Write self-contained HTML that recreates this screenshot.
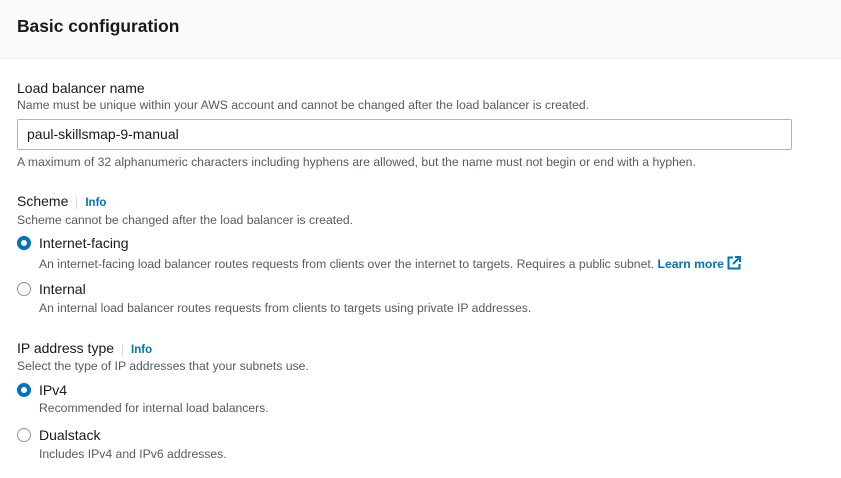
<!DOCTYPE html>
<html><head><style>
*{margin:0;padding:0;box-sizing:border-box}
body{width:841px;height:478px;background:#fff;font-family:"Liberation Sans",sans-serif;color:#16191f;position:relative;overflow:hidden}
.hdr{position:absolute;left:0;top:0;width:841px;height:59px;background:#fafafa;border-bottom:1px solid #eaeded}
.t{position:absolute;white-space:nowrap}
.h{left:17px;top:16px;font-size:17.4px;font-weight:bold}
.l{font-size:14px;color:#16191f}
.d{font-size:12.2px;color:#545b64}
.info{color:#0073bb;font-weight:bold;font-size:11.5px;border-left:1px solid #d5dbdb;padding-left:8px;margin-left:8px}
.inp{position:absolute;left:17px;top:119px;width:775px;height:31px;border:1px solid #aab7b8;border-radius:2px;font-size:14px;padding:6px 9px}
.r{position:absolute;left:17px;width:14px;height:14px;border-radius:50%;border:1px solid #8a9596;background:#fff}
.r.on{border:4px solid #0073bb}
a{color:#0073bb;font-weight:bold;text-decoration:none}
</style></head><body>
<div class="hdr"></div>
<div class="t h">Basic configuration</div>
<div class="t l" style="left:17px;top:80px">Load balancer name</div>
<div class="t d" style="left:17px;top:98px">Name must be unique within your AWS account and cannot be changed after the load balancer is created.</div>
<div class="inp">paul-skillsmap-9-manual</div>
<div class="t d" style="left:17px;top:155px">A maximum of 32 alphanumeric characters including hyphens are allowed, but the name must not begin or end with a hyphen.</div>
<div class="t l" style="left:17px;top:193px">Scheme<span class="info">Info</span></div>
<div class="t d" style="left:17px;top:213px">Scheme cannot be changed after the load balancer is created.</div>
<div class="r on" style="top:236px"></div>
<div class="t l" style="left:39px;top:235px">Internet-facing</div>
<div class="t d" style="left:39px;top:256px">An internet-facing load balancer routes requests from clients over the internet to targets. Requires a public subnet. <a>Learn more</a> <svg width="14" height="14" viewBox="0 0 14 14" style="vertical-align:-2px"><path d="M6 1.5H1.5v11h11V8" fill="none" stroke="#0073bb" stroke-width="2"/><path d="M8 1h5v5M13 1L6 8" fill="none" stroke="#0073bb" stroke-width="2"/></svg></div>
<div class="r" style="top:282px"></div>
<div class="t l" style="left:39px;top:281px">Internal</div>
<div class="t d" style="left:39px;top:301px">An internal load balancer routes requests from clients to targets using private IP addresses.</div>
<div class="t l" style="left:17px;top:340px">IP address type<span class="info">Info</span></div>
<div class="t d" style="left:17px;top:359px">Select the type of IP addresses that your subnets use.</div>
<div class="r on" style="top:383px"></div>
<div class="t l" style="left:39px;top:382px">IPv4</div>
<div class="t d" style="left:39px;top:401px">Recommended for internal load balancers.</div>
<div class="r" style="top:428px"></div>
<div class="t l" style="left:39px;top:427px">Dualstack</div>
<div class="t d" style="left:39px;top:447px">Includes IPv4 and IPv6 addresses.</div>
</body></html>
